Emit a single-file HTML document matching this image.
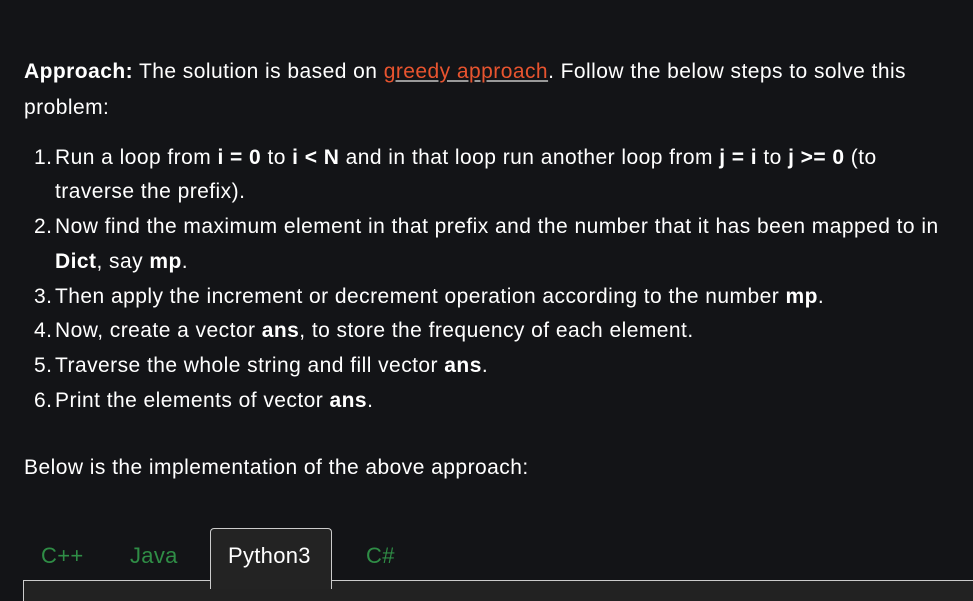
<!DOCTYPE html>
<html><head><style>
body{margin:0;width:973px;height:589px;background:#131417;color:#fff;font-family:"Liberation Sans",sans-serif;font-size:21px;overflow:hidden;position:relative;letter-spacing:0.45px}
.l{position:absolute;white-space:nowrap;line-height:24px}
.n{position:absolute;left:34px;line-height:24px}
b{font-weight:bold}
a{color:#e8542f;text-decoration:underline;text-decoration-color:#999}
.tab{position:absolute;top:543px;font-size:22px;color:#2f8d46;letter-spacing:0.3px}
</style></head><body>
<div class="l" style="left:24px;top:60px"><b>Approach:</b> The solution is based on <a>greedy approach</a>. Follow the below steps to solve this</div>
<div class="l" style="left:24px;top:96px">problem:</div>
<div class="n" style="top:146px">1.</div><div class="l" style="left:55px;top:146px">Run a loop from <b>i = 0</b> to <b>i &lt; N</b> and in that loop run another loop from <b>j = i</b> to <b>j &gt;= 0</b> (to</div>
<div class="l" style="left:55px;top:180px">traverse the prefix).</div>
<div class="n" style="top:215px">2.</div><div class="l" style="left:55px;top:215px">Now find the maximum element in that prefix and the number that it has been mapped to in</div>
<div class="l" style="left:55px;top:250px"><b>Dict</b>, say <b>mp</b>.</div>
<div class="n" style="top:285px">3.</div><div class="l" style="left:55px;top:285px">Then apply the increment or decrement operation according to the number <b>mp</b>.</div>
<div class="n" style="top:319px">4.</div><div class="l" style="left:55px;top:319px">Now, create a vector <b>ans</b>, to store the frequency of each element.</div>
<div class="n" style="top:354px">5.</div><div class="l" style="left:55px;top:354px">Traverse the whole string and fill vector <b>ans</b>.</div>
<div class="n" style="top:389px">6.</div><div class="l" style="left:55px;top:389px">Print the elements of vector <b>ans</b>.</div>
<div class="l" style="left:24px;top:456px">Below is the implementation of the above approach:</div>
<div style="position:absolute;left:23px;top:580px;width:960px;height:20px;border-top:1px solid #ccc;border-left:1px solid #ccc;background:#222"></div>
<div style="position:absolute;left:210px;top:528px;width:120px;height:60px;border:1px solid #ccc;border-bottom:none;border-radius:4px 4px 0 0;background:#232323"></div>
<div class="tab" style="left:41px">C++</div>
<div class="tab" style="left:130px">Java</div>
<div class="tab" style="left:228px;color:#fff">Python3</div>
<div class="tab" style="left:366px">C#</div>
</body></html>
